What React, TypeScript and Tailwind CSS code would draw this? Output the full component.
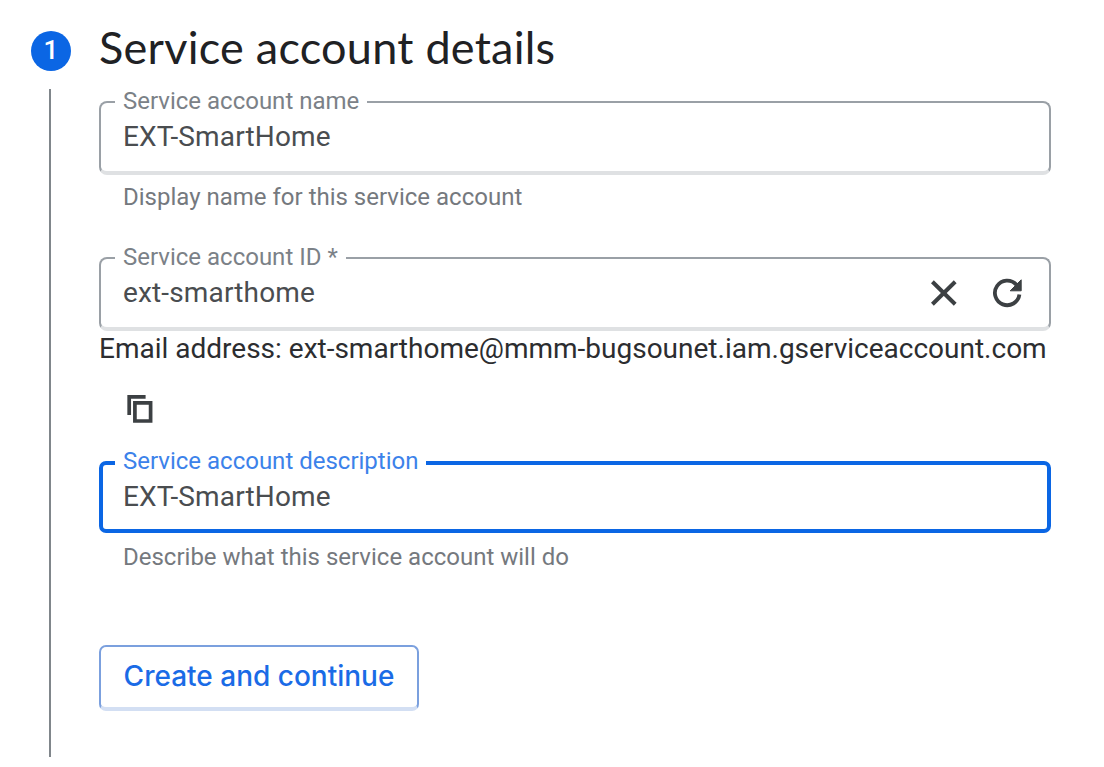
import type { ReactNode } from "react";

function CloseIcon() {
  return (
    <svg width="28" height="28" viewBox="0 0 28 28" fill="none" stroke="#3c4043" strokeWidth="4">
      <path d="M2.4 2.8 25.2 25.2M25.2 2.8 2.4 25.2" />
    </svg>
  );
}

function RefreshIcon() {
  return (
    <svg width="30" height="30" viewBox="0 0 30 30" fill="none">
      <path d="M27.4 16.6A12.3 12.3 0 1 1 24.3 6.6" stroke="#3c4043" strokeWidth="3.8" />
      <path d="M29.2 1.8v11H18.2z" fill="#3c4043" stroke="#3c4043" strokeWidth="1" />
    </svg>
  );
}

function CopyIcon() {
  return (
    <svg width="26" height="28" viewBox="0 0 26 28" fill="none" stroke="#3c4043" strokeWidth="3.7">
      <path d="M18.6 1.9H2.2V20" />
      <path d="M7.9 7.9H23.6V26H7.9z" />
    </svg>
  );
}

function Field({ label, value, active, children }: { label: ReactNode; value: string; active?: boolean; children?: ReactNode }) {
  return (
    <fieldset
      className={
        active
          ? "h-[84px] rounded-[7px] border-4 border-[#0b66e4] pl-3"
          : "h-[87px] rounded-[8px] border-2 border-b-4 border-[#9aa0a6] border-b-[#dfe1e3] pl-[14px]"
      }
    >
      <legend
        className={
          active
            ? "h-7 px-2 text-[24px] leading-[25px] text-[#3c82ea]"
            : "h-7 px-2 text-[24px] leading-[26px] text-[#7b8187]"
        }
      >
        {label}
      </legend>
      <div className={active ? "flex pl-2 pr-6 pt-1" : "flex pl-2 pr-[27px] pt-[5px]"}>
        <div className="grow text-[28px] leading-8 tracking-[0.15px] text-[#4a4d50]">{value}</div>
        {children}
      </div>
    </fieldset>
  );
}

export default function App() {
  return (
    <main className="flex h-[767px] w-[1104px] overflow-hidden bg-white pl-[31px] pt-[31px] font-['Roboto',sans-serif]">
      <div className="flex w-10 shrink-0 flex-col items-center">
        <div className="flex h-10 w-10 items-center justify-center rounded-full bg-[#0b66e4] pb-[2px] text-[26px] font-medium leading-none text-white">
          1
        </div>
        <div className="mr-[2px] mt-[18px] h-[668px] w-[2px] bg-[#80868b]" />
      </div>
      <div className="ml-7 flex w-[952px] shrink-0 flex-col">
        <h1 className="-mt-[9px] h-[66px] whitespace-nowrap font-['Lato',sans-serif] text-[45px] leading-[50px] tracking-[0.25px] text-[#202124]">
          Service account details
        </h1>
        <Field label="Service account name" value="EXT-SmartHome" />
        <p className="ml-6 mt-2 text-[24px] leading-7 text-[#75797e]">
          Display name for this service account
        </p>
        <div className="mt-[33px]">
          <Field label="Service account ID *" value="ext-smarthome">
            <div className="flex items-center gap-[34px]">
              <CloseIcon />
              <RefreshIcon />
            </div>
          </Field>
        </div>
        <p className="mt-[2px] whitespace-nowrap text-[28px] leading-8 text-[#2c2d30]">
          Email address: ext-smarthome@mmm-bugsounet.iam.gserviceaccount.com
        </p>
        <div className="ml-7 mt-[30px] h-[54px]">
          <CopyIcon />
        </div>
        <Field label="Service account description" value="EXT-SmartHome" active />
        <p className="ml-6 mt-[10px] text-[24px] leading-7 text-[#75797e]">
          Describe what this service account will do
        </p>
        <button className="mt-[74px] h-[66px] w-[320px] whitespace-nowrap rounded-[7px] border-2 border-b-4 border-[#7ba0de] border-b-[#d3dff3] pb-[3px] font-['Inter',sans-serif] text-[28px] font-medium leading-8 text-[#1a6be6]">
          Create and continue
        </button>
      </div>
    </main>
  );
}
